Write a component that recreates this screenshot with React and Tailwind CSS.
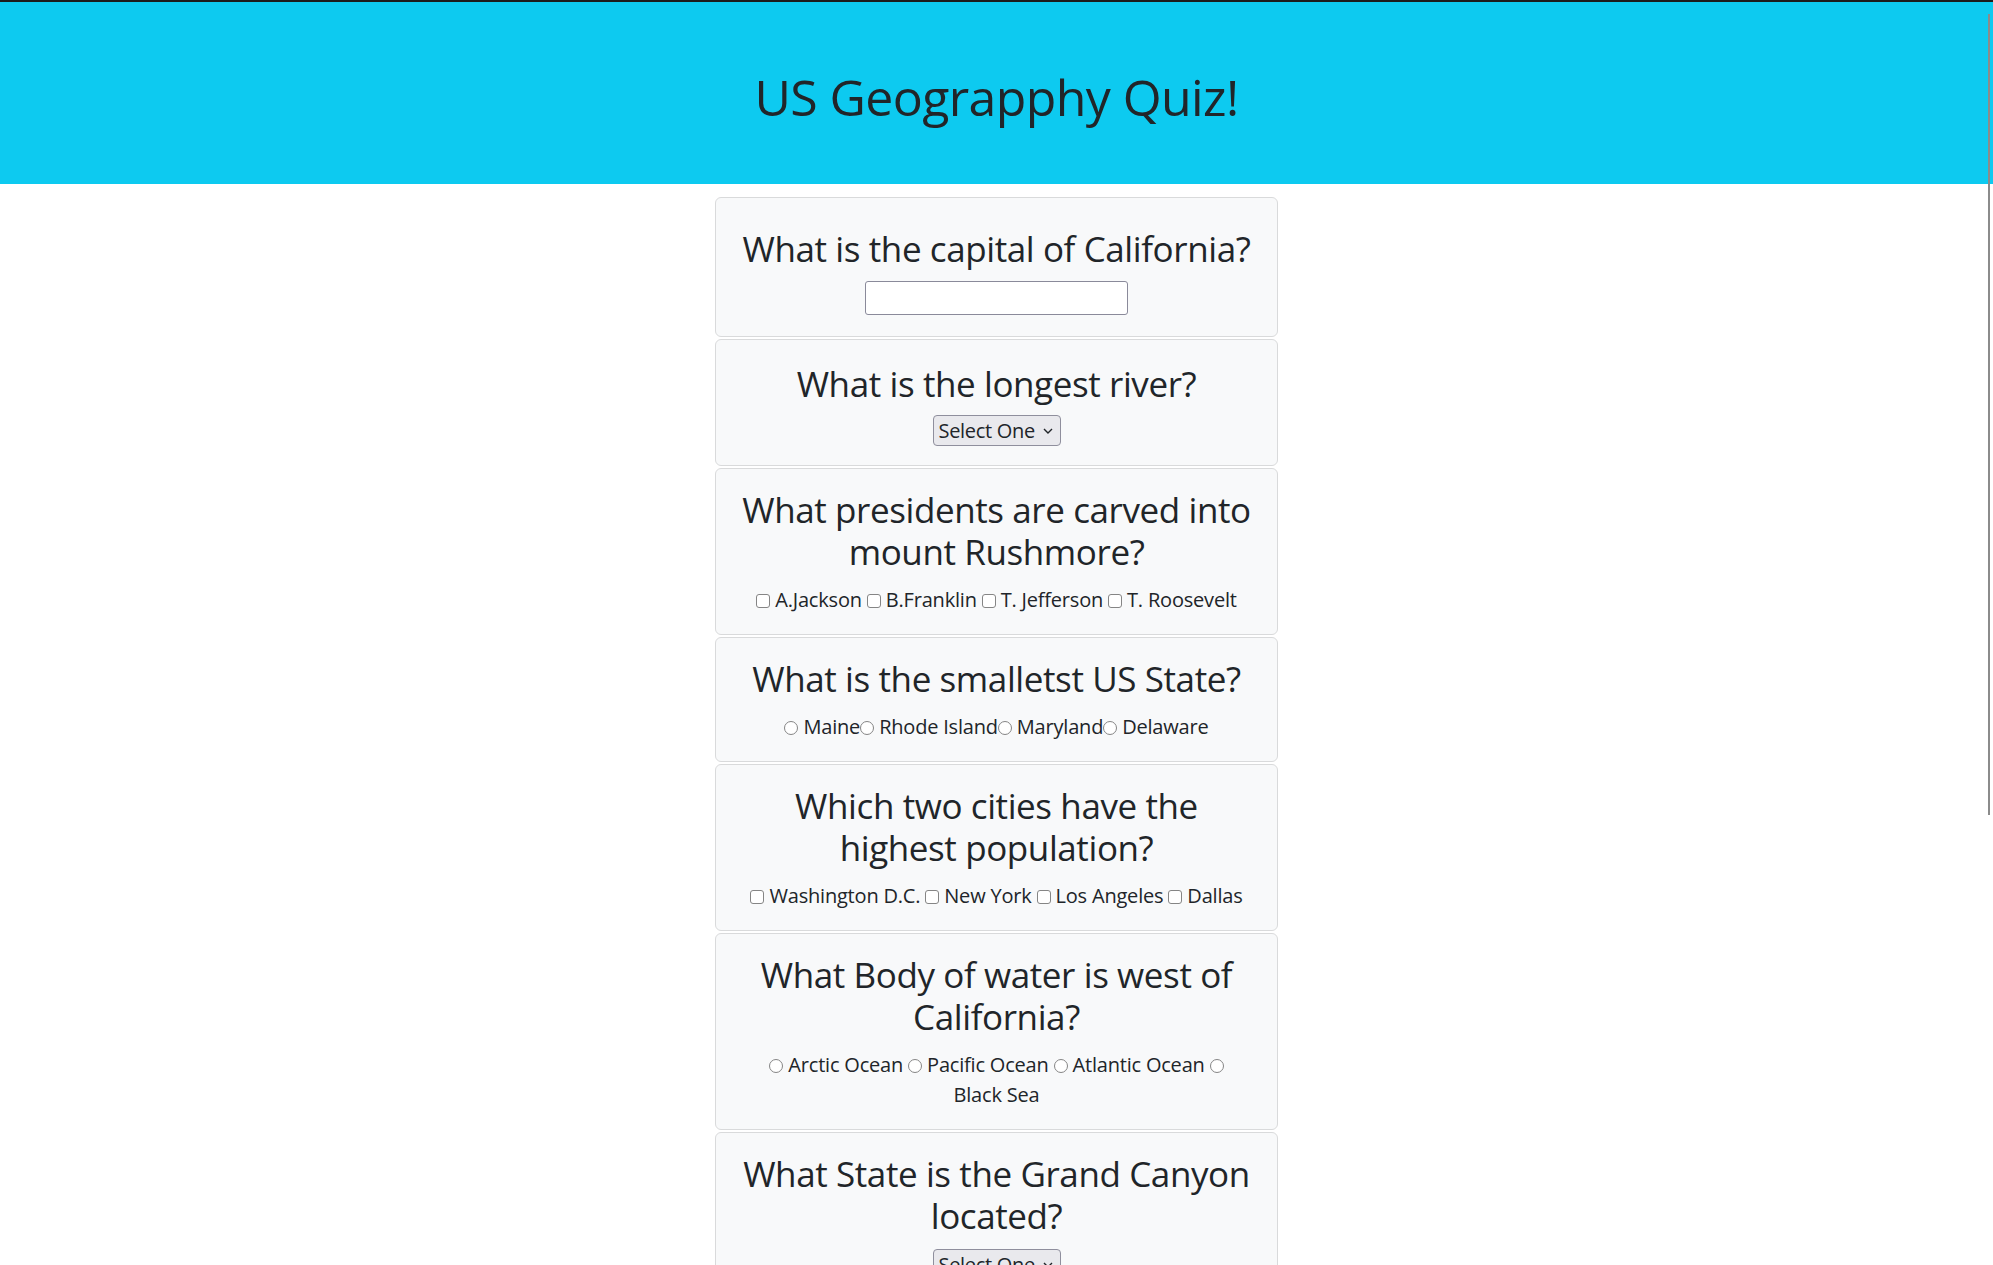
import { Fragment } from 'react'

const card = 'w-[563px] rounded-[6px] border border-[#d9dadb] bg-[#f8f9fa] px-[20px] text-center'
const heading = 'text-[35px] font-normal leading-[42px] tracking-[-0.4px]'
const row = 'text-[20px] leading-[30px] tracking-[-0.2px]'

function Choices({ type, name, items, spaced = true }) {
  const box =
    type === 'radio'
      ? 'inline-block h-[14px] w-[14px] appearance-none rounded-full border border-[#858585] bg-white align-[-1px]'
      : 'inline-block h-[14px] w-[14px] appearance-none rounded-[3px] border border-[#858585] bg-white align-[-1px]'
  return (
    <div className={row}>
      {items.map((item, i) => (
        <Fragment key={item}>
          <input type={type} name={name} className={box} />
          {' ' + item.replace(/ /g, '\u00a0')}
          {spaced && i < items.length - 1 ? ' ' : ''}
        </Fragment>
      ))}
    </div>
  )
}

function SelectBox() {
  return (
    <div className="inline-flex h-[31px] w-[128px] items-center justify-between rounded-[4px] border border-[#8f8f9d] bg-[#e9e9ed] pl-[5px] pr-[7px] text-[20px] tracking-[-0.3px]">
      <span>Select One</span>
      <svg width="10" height="6" viewBox="0 0 10 6">
        <path d="M1 1l4 4 4-4" stroke="#212529" strokeWidth="1.4" fill="none" />
      </svg>
    </div>
  )
}

export default function App() {
  return (
    <div className="min-h-screen bg-white font-['Open_Sans',sans-serif] text-[#212529]">
      <div className="h-[2px] bg-[#1c1c1c]" />
      <header className="h-[182px] bg-[#0dcaf0] pt-[65px] text-center">
        <h1 className="text-[50px] font-normal leading-[60px] tracking-[-0.6px]">US Geograpphy Quiz!</h1>
      </header>

      <main className="mt-[13px] flex flex-col items-center gap-[2px] pb-10">
        <div className={`${card} pt-[30px] pb-[21px]`}>
          <h3 className={`${heading} mb-[11px]`}>What is the capital of California?</h3>
          <input type="text" className="mx-auto block h-[34px] w-[263px] rounded-[3px] border border-[#8a8a9a] bg-white" />
        </div>

        <div className={`${card} pt-[23px] pb-[19px]`}>
          <h3 className={`${heading} mb-[10px]`}>What is the longest river?</h3>
          <SelectBox />
        </div>

        <div className={`${card} pt-[20px] pb-[19px]`}>
          <h3 className={`${heading} mb-[12px]`}>What presidents are carved into mount Rushmore?</h3>
          <Choices type="checkbox" name="rushmore" items={['A.Jackson', 'B.Franklin', 'T. Jefferson', 'T. Roosevelt']} />
        </div>

        <div className={`${card} pt-[20px] pb-[19px]`}>
          <h3 className={`${heading} mb-[12px]`}>What is the smalletst US State?</h3>
          <Choices type="radio" name="smallest" spaced={false} items={['Maine', 'Rhode Island', 'Maryland', 'Delaware']} />
        </div>

        <div className={`${card} pt-[20px] pb-[19px]`}>
          <h3 className={`${heading} mb-[12px]`}>Which two cities have the highest population?</h3>
          <Choices type="checkbox" name="cities" items={['Washington D.C.', 'New York', 'Los Angeles', 'Dallas']} />
        </div>

        <div className={`${card} pt-[20px] pb-[19px]`}>
          <h3 className={`${heading} mb-[12px]`}>What Body of water is west of California?</h3>
          <Choices type="radio" name="water" items={['Arctic Ocean', 'Pacific Ocean', 'Atlantic Ocean', 'Black Sea']} />
        </div>

        <div className={`${card} pt-[20px] pb-[20px]`}>
          <h3 className={`${heading} mb-[12px]`}>What State is the Grand Canyon located?</h3>
          <SelectBox />
        </div>
      </main>

      <div className="fixed right-[3px] top-[14px] h-[801px] w-[2px] bg-[#8b8b8b]" />
    </div>
  )
}
